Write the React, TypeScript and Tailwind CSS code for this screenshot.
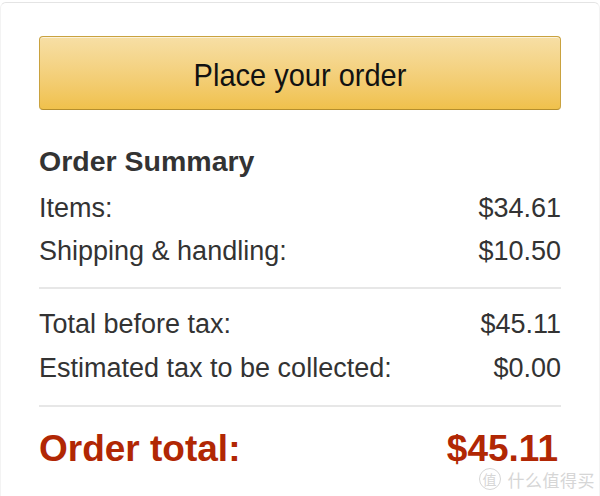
const rows1 = [
  { label: 'Items:', value: '$34.61' },
  { label: 'Shipping & handling:', value: '$10.50' },
];

const rows2 = [
  { label: 'Total before tax:', value: '$45.11' },
  { label: 'Estimated tax to be collected:', value: '$0.00' },
];

function Row({ label, value }: { label: string; value: string }) {
  return (
    <div className="flex h-[43px] items-center justify-between text-[27px] leading-none text-[#333]">
      <span>{label}</span>
      <span>{value}</span>
    </div>
  );
}

export default function App() {
  return (
    <div
      className="relative h-[496px] w-[600px] overflow-hidden bg-white pt-[2px]"
      style={{ fontFamily: '"Liberation Sans", Arial, sans-serif' }}
    >
      <div className="h-[494px] rounded-t-[6px] border border-b-0 border-[#e4e4e4] border-x-[#f3f3f3] px-[38px] pt-[33px]">
        <button className="flex h-[74px] w-full items-center justify-center rounded-[4px] border border-[#c9a23f] border-b-[#b48e2e] bg-gradient-to-b from-[#f7dfa5] to-[#f0c14b] pt-[5px] text-[29px] text-[#111] shadow-[inset_0_1px_0_rgba(255,255,255,0.6)]">
          <span className="inline-block scale-y-[1.08]">Place your order</span>
        </button>

        <div className="mt-[31px] flex h-[40px] items-center text-[28.5px] font-bold leading-none text-[#333]">
          Order Summary
        </div>

        <div className="mt-[6px]">
          {rows1.map(r => <Row key={r.label} {...r} />)}
        </div>

        <div className="mt-[14px] h-[2px] bg-[#e7e7e7]" />

        <div className="mt-[13px] [&>div]:h-[44px]">
          {rows2.map(r => <Row key={r.label} {...r} />)}
        </div>

        <div className="mt-[15px] h-[2px] bg-[#e7e7e7]" />

        <div className="mt-[16px] flex h-[50px] items-center justify-between text-[37px] font-bold leading-none text-[#b12704]">
          <span>Order total:</span>
          <span className="pr-[3px]">$45.11</span>
        </div>
      </div>

      {/* watermark */}
      <div
        className="absolute bottom-[6px] right-[5px] flex items-center gap-[7px] text-[#d6d6d6]"
        style={{ fontFamily: '"Noto Sans CJK SC", sans-serif' }}
      >
        <span className="flex h-[22px] w-[22px] items-center justify-center rounded-full border-[1.5px] border-[#d6d6d6] text-[14px] leading-none">值</span>
        <span className="text-[17px] leading-none tracking-[0.5px]">什么值得买</span>
      </div>
    </div>
  );
}
